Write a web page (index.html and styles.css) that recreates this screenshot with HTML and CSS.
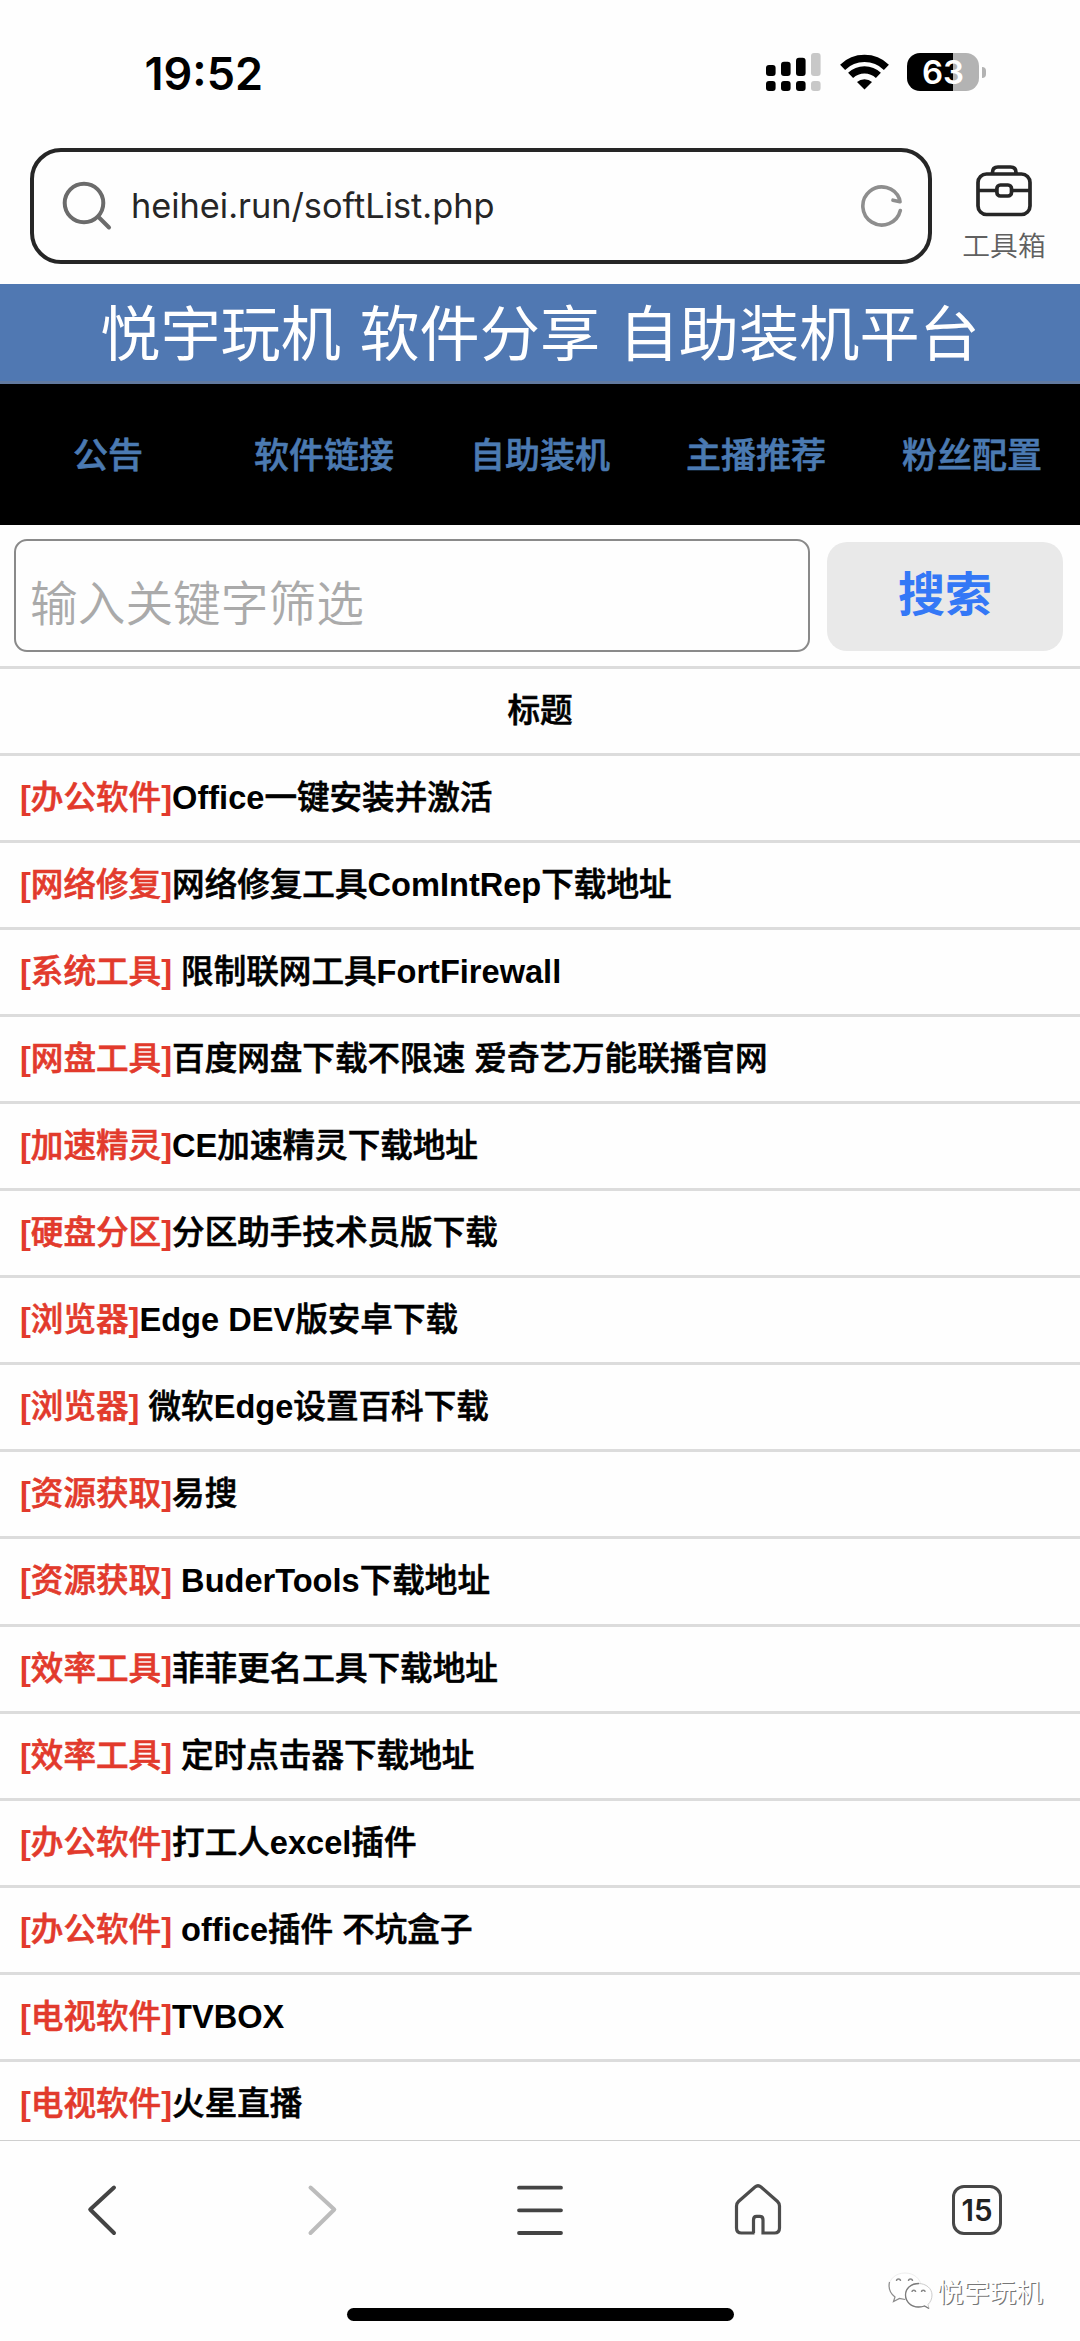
FILE: index.html
```html
<!DOCTYPE html>
<html lang="zh-CN">
<head>
<meta charset="utf-8">
<title>悦宇玩机</title>
<link rel="stylesheet" href="styles.css">
</head>
<body>
<div class="phone">
  <header class="status">
    <span class="time">19:52</span>
    <div class="indicators">
      <svg class="signal" width="55" height="38" viewBox="0 0 55 38">
        <g fill="#000">
          <rect x="0" y="12" width="9.6" height="11" rx="3"/><rect x="15" y="8.7" width="9.6" height="14.3" rx="3"/><rect x="30" y="4.7" width="9.6" height="18.3" rx="3"/>
          <rect x="0" y="28" width="9.6" height="10" rx="3"/><rect x="15" y="28" width="9.6" height="10" rx="3"/><rect x="30" y="28" width="9.6" height="10" rx="3"/>
        </g>
        <g fill="#c8c8c8"><rect x="45" y="0" width="9.6" height="23" rx="3"/><rect x="45" y="28" width="9.6" height="10" rx="3"/></g>
      </svg>
      <svg class="wifi" width="49" height="36" viewBox="0 0 49 36">
        <g fill="none" stroke="#000" stroke-width="7.2">
          <path d="M2.6 13.3A31.5 31.5 0 0 1 46.4 13.3"/>
          <path d="M10.6 21.4A20 20 0 0 1 38.4 21.4"/>
        </g>
        <path d="M17 28.1A11 11 0 0 1 32 28.1L24.5 35.5Z"/>
      </svg>
      <div class="battery"><span class="charge">63</span><i class="knob"></i></div>
    </div>
  </header>

  <div class="address-row">
    <div class="address">
      <svg class="magnifier" width="50" height="50" viewBox="0 0 50 50" fill="none" stroke="#6b6b6b" stroke-width="4" stroke-linecap="round"><circle cx="22" cy="22" r="19.3"/><path d="M36.5 36L47 46.5"/></svg>
      <span class="url">heihei.run/softList.php</span>
      <svg class="reload" width="44" height="44" viewBox="0 0 44 44" fill="none" stroke="#8e8e8e" stroke-width="3.6" stroke-linecap="round" stroke-linejoin="round"><path d="M40.3 26.5A19 19 0 1 1 39.5 15L40 17.8L33 16.2"/></svg>
    </div>
    <div class="toolbox">
      <svg width="56" height="52" viewBox="0 0 56 52" fill="none" stroke="#262626" stroke-width="3.7"><rect x="2" y="9" width="52" height="40.5" rx="8.5"/><path d="M16.5 9V7.5Q16.5 2 22 2H34.5Q40 2 40 7.5V9M2 25.5H20.5M36 25.5H54"/><rect x="20.9" y="20" width="14.6" height="11" rx="3.5"/></svg>
      <span>工具箱</span>
    </div>
  </div>

  <h1 class="banner">悦宇玩机 软件分享 自助装机平台</h1>
  <nav class="menu"><a>公告</a><a>软件链接</a><a>自助装机</a><a>主播推荐</a><a>粉丝配置</a></nav>

  <div class="search">
    <div class="keyword">输入关键字筛选</div>
    <div class="submit">搜索</div>
  </div>

  <main class="list">
    <div class="row heading">标题</div>
    <div class="row"><span class="tag"><strong>[</strong>办公软件<strong>]</strong></span><strong>Office</strong>一键安装并激活</div>
    <div class="row"><span class="tag"><strong>[</strong>网络修复<strong>]</strong></span>网络修复工具<strong>ComIntRep</strong>下载地址</div>
    <div class="row"><span class="tag"><strong>[</strong>系统工具<strong>]</strong></span> 限制联网工具<strong>FortFirewall</strong></div>
    <div class="row"><span class="tag"><strong>[</strong>网盘工具<strong>]</strong></span>百度网盘下载不限速 爱奇艺万能联播官网</div>
    <div class="row"><span class="tag"><strong>[</strong>加速精灵<strong>]</strong></span><strong>CE</strong>加速精灵下载地址</div>
    <div class="row"><span class="tag"><strong>[</strong>硬盘分区<strong>]</strong></span>分区助手技术员版下载</div>
    <div class="row"><span class="tag"><strong>[</strong>浏览器<strong>]</strong></span><strong>Edge DEV</strong>版安卓下载</div>
    <div class="row"><span class="tag"><strong>[</strong>浏览器<strong>]</strong></span> 微软<strong>Edge</strong>设置百科下载</div>
    <div class="row"><span class="tag"><strong>[</strong>资源获取<strong>]</strong></span>易搜</div>
    <div class="row"><span class="tag"><strong>[</strong>资源获取<strong>]</strong></span> <strong>BuderTools</strong>下载地址</div>
    <div class="row"><span class="tag"><strong>[</strong>效率工具<strong>]</strong></span>菲菲更名工具下载地址</div>
    <div class="row"><span class="tag"><strong>[</strong>效率工具<strong>]</strong></span> 定时点击器下载地址</div>
    <div class="row"><span class="tag"><strong>[</strong>办公软件<strong>]</strong></span>打工人<strong>excel</strong>插件</div>
    <div class="row"><span class="tag"><strong>[</strong>办公软件<strong>]</strong></span> <strong>office</strong>插件 不坑盒子</div>
    <div class="row"><span class="tag"><strong>[</strong>电视软件<strong>]</strong></span><strong>TVBOX</strong></div>
    <div class="row"><span class="tag"><strong>[</strong>电视软件<strong>]</strong></span>火星直播</div>
  </main>

  <footer class="toolbar">
    <div class="tabs">
      <svg width="60" height="60" viewBox="0 0 60 60" fill="none" stroke="#444" stroke-width="4" stroke-linecap="round" stroke-linejoin="round"><path d="M42 7.5L18.2 29.5L42 53"/></svg>
      <svg width="60" height="60" viewBox="0 0 60 60" fill="none" stroke="#bcbcbc" stroke-width="4" stroke-linecap="round" stroke-linejoin="round"><path d="M19.5 7.5L43.3 29.5L19.5 53"/></svg>
      <svg width="60" height="60" viewBox="0 0 60 60" fill="none" stroke="#444" stroke-width="3.8" stroke-linecap="round"><path d="M9 7.7H51M9 30.3H51M9 53H51"/></svg>
      <svg width="60" height="60" viewBox="0 0 60 60" fill="none" stroke="#4c4c4c" stroke-width="3.2"><path d="M26.5 53H13.5Q8.5 53 8.5 48V26Q8.5 23.5 10.5 21.5L27 7Q30 4.5 33 7L49.5 21.5Q51.5 23.5 51.5 26V48Q51.5 53 46.5 53H35V40Q35 36.3 32 36.3H28.5Q25.5 36.3 25.5 40V53"/></svg>
      <div class="count"><span>15</span></div>
    </div>
    <div class="home-bar"></div>
    <div class="watermark">
      <svg width="45" height="38" viewBox="0 0 45 38">
        <path d="M17 1C8 1 1 7 1 14.5C1 19 3.5 22.5 7 25L5.5 29.5L11.5 26.5Q14 27.5 18 27.5C26 27.5 33 22 33 14.5S26 1 17 1Z" fill="#fff" stroke="#eee"/>
        <path d="M1.5 10C0 17 3 22 7 25L5.5 29.5L11.5 26.5L17 27.5" fill="none" stroke="#8c8c8c" stroke-width="1.2"/>
        <path d="M30.5 11.5C23 11.5 17.5 16.5 17.5 23S23 35 30.5 35Q34 35 36.5 34L41 36.5L40 32.5C42.5 30 44 27 44 23C44 16.5 38 11.5 30.5 11.5Z" fill="#fff" stroke="#ccc"/>
        <path d="M31 11.5C23 11.5 17.5 16.5 17.5 23S23 35 30.5 35Q34 35 36.5 34L41 36.5" fill="none" stroke="#7c7c7c" stroke-width="1.3"/>
        <path d="M8.5 9a2 2 0 0 1 4 0M20.5 9a2 2 0 0 1 4 0M24 20a1.8 1.8 0 0 1 3.6 0M33.5 20a1.8 1.8 0 0 1 3.6 0" fill="none" stroke="#888" stroke-width="1.4"/>
      </svg>
      <span>悦宇玩机</span>
    </div>
  </footer>
</div>
</body>
</html>
```
FILE: styles.css
```css
* { box-sizing: border-box; }
body { margin: 0; background: #fff; font-family: "Liberation Sans", "Noto Sans CJK SC", sans-serif; color: #000; }
.phone { width: 1080px; height: 2341px; overflow: hidden; display: flex; flex-direction: column; position: relative; background: #fefefe; }

.status { height: 148px; flex: none; display: flex; justify-content: space-between; padding: 53px 93px 0 144.5px; }
.time { font: 600 45px/42px Inter, sans-serif; }
.indicators { display: flex; height: 38px; }
.wifi { margin: 1px 0 0 18.5px; }
.battery { position: relative; width: 72px; height: 38px; margin: 0 8px 0 18.5px; border-radius: 13px; background: linear-gradient(90deg, #000 0 64%, #b3b3b3 64%); text-align: center; }
.charge { font: 600 33px/39px Inter, sans-serif; color: #fff; }
.knob { position: absolute; right: -7px; top: 14px; width: 4px; height: 11px; border-radius: 0 5px 5px 0; background: #b3b3b3; }

.address-row { height: 136px; flex: none; display: flex; padding-left: 30px; }
.address { flex: none; width: 902px; height: 116px; border: 4px solid #262626; border-radius: 31px; display: flex; align-items: center; padding: 0 24px 0 28px; }
.magnifier { flex: none; }
.url { flex: 1; margin-left: 19px; font: 400 34.3px/50px Inter, sans-serif; color: #262626; }
.toolbox { flex: none; width: 84px; margin-left: 30px; padding-top: 17px; display: flex; flex-direction: column; align-items: center; }
.toolbox svg { flex: none; }
.toolbox span { font: 350 27.8px/40px "Noto Sans CJK SC", sans-serif; color: #606060; margin-top: 7px; white-space: nowrap; }

.banner { margin: 0; height: 100px; flex: none; background: #5078b2; border-bottom: 3px solid #61799f; color: #fff; font-family: "Noto Sans CJK SC", sans-serif; font-size: 60.2px; font-weight: 400; line-height: 91px; text-align: center; white-space: nowrap; word-spacing: 5px; }
.menu { height: 141px; flex: none; background: #000; display: grid; grid-template-columns: repeat(5, 1fr); text-align: center; font: 500 35px/137px "Noto Sans CJK SC", sans-serif; color: #4b7ab2; -webkit-text-stroke: 0.6px; }

.search { height: 141px; flex: none; display: flex; align-items: flex-start; padding: 14px 16px 0 14px; }
.keyword { width: 796px; height: 113px; border: 2.5px solid #8a8a8a; border-radius: 13px; padding-left: 14px; font: 350 47.7px/119px "Noto Sans CJK SC", sans-serif; color: #aaa; }
.submit { width: 236px; height: 109px; margin: 3px 0 0 17px; border-radius: 20px; background: #e9e9e9; color: #3478f6; font-size: 47px; font-weight: 700; text-align: center; line-height: 106px; }

.list { flex: none; height: 1474px; overflow: hidden; }
.row { height: 87.06px; border-top: 3px solid #dcdcdc; padding-left: 20px; font-size: 32.6px; line-height: 83px; font-weight: 500; white-space: pre; -webkit-text-stroke: 0.6px; }
.row strong { font-weight: 700; -webkit-text-stroke: 0; }
.tag { color: #e23a2c; }
.heading { padding: 0; text-align: center; }

.toolbar { flex: none; height: 201px; border-top: 1px solid #cfcfcf; background: #fefefe; position: relative; }
.tabs { display: flex; justify-content: space-between; align-items: center; padding: 39px 73px 0 72px; }
.tabs svg { flex: none; }
.count { width: 60px; height: 60px; display: grid; place-items: center; }
.count span { width: 50px; height: 50px; border: 3px solid #474747; border-radius: 12px; font: 600 29.5px/45px Inter, sans-serif; color: #222; text-align: center; }
.home-bar { width: 387px; height: 13px; border-radius: 7px; background: #000; margin: 68px auto 0; }
.watermark { position: absolute; left: 888px; top: 131px; display: flex; align-items: center; }
.watermark span { margin-left: 4px; font: 350 26.4px/38px "Noto Sans CJK SC", sans-serif; color: #fff; text-shadow: 1.3px 1px 0.5px #777; white-space: nowrap; }
```
